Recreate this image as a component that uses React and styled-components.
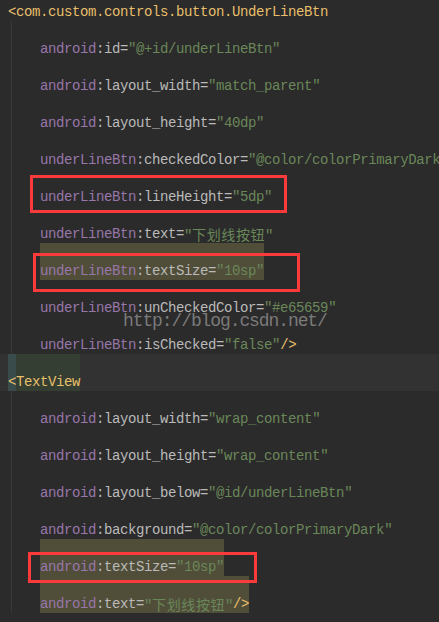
import styled, { createGlobalStyle } from "styled-components";

const Global = createGlobalStyle`
  html, body {
    margin: 0;
    background: #2b2b2b;
    overflow: hidden;
  }
`;

const Page = styled.div`
  position: relative;
  display: flow-root;
  width: 439px;
  height: 622px;
  overflow: hidden;
  background: #2b2b2b;
  font-family: "Liberation Mono", "Noto Sans CJK SC", monospace;
  font-size: 14px;
  letter-spacing: -0.4px;
`;

const Editor = styled.div`
  margin-top: -16px;
`;

const Row = styled.div`
  display: flex;
  height: 37px;
  padding-left: ${(p) => p.$indent || 0}px;
  background: ${(p) => (p.$band ? "#323232" : "transparent")};
  white-space: pre;
`;

const Content = styled.div`
  display: flex;
  padding-top: 18px;
  line-height: 20px;
  background: ${(p) => p.$bg || "transparent"};
`;

const Group = styled.div`
  margin-left: 11px;
  border-left: 1px solid #393939;
`;

const Tag = styled.span`
  color: #e8bf6a;
`;
const Ns = styled.span`
  color: #9876aa;
`;
const Attr = styled.span`
  color: #bababa;
`;
const Val = styled.span`
  color: #6a8759;
`;
const Cjk = styled.span`
  font-family: "Noto Sans CJK SC", sans-serif;
  font-size: 14px;
  letter-spacing: 0.6px;
`;

const RedBox = styled.div`
  position: absolute;
  box-sizing: border-box;
  border: 3px solid #fb3b3b;
  pointer-events: none;
`;

const Watermark = styled.div`
  position: absolute;
  left: 123px;
  top: 311px;
  font-family: "Liberation Mono", monospace;
  font-size: 18px;
  letter-spacing: -1.1px;
  color: rgba(150, 150, 150, 0.75);
  pointer-events: none;
`;

const OLIVE = "#504e39";

function Attribute({ ns, name, value, close, mark }) {
  const hasCjk = /[\u4e00-\u9fff]/.test(value);
  return (
    <Row $indent={28}>
      <Content $bg={mark ? OLIVE : null}>
        <Ns>{ns}</Ns>
        <Attr>:{name}=</Attr>
        <Val>"{hasCjk ? <Cjk>{value}</Cjk> : value}"</Val>
        {close && <Tag>/&gt;</Tag>}
      </Content>
    </Row>
  );
}

const first = [
  ["android", "id", "@+id/underLineBtn"],
  ["android", "layout_width", "match_parent"],
  ["android", "layout_height", "40dp"],
  ["underLineBtn", "checkedColor", "@color/colorPrimaryDark"],
  ["underLineBtn", "lineHeight", "5dp"],
  ["underLineBtn", "text", "下划线按钮"],
  ["underLineBtn", "textSize", "10sp", true],
  ["underLineBtn", "unCheckedColor", "#e65659"],
  ["underLineBtn", "isChecked", "false"],
];

const second = [
  ["android", "layout_width", "wrap_content"],
  ["android", "layout_height", "wrap_content"],
  ["android", "layout_below", "@id/underLineBtn"],
  ["android", "background", "@color/colorPrimaryDark"],
  ["android", "textSize", "10sp", true],
  ["android", "text", "下划线按钮", true],
];

export default function App() {
  return (
    <Page>
      <Global />
      <Editor>
        <Row $indent={8}>
          <Content>
            <Tag>&lt;com.custom.controls.button.UnderLineBtn</Tag>
          </Content>
        </Row>
        <Group>
          {first.map(([ns, name, value, mark], i) => (
            <Attribute
              key={name + i}
              ns={ns}
              name={name}
              value={value}
              mark={mark}
              close={i === first.length - 1}
            />
          ))}
        </Group>
        <Row $indent={8} $band>
          <Content $bg="#3a4b4b">
            <Tag>&lt;</Tag>
          </Content>
          <Content $bg="#343e32">
            <Tag>TextView</Tag>
          </Content>
        </Row>
        <Group>
          {second.map(([ns, name, value, mark], i) => (
            <Attribute
              key={name + i}
              ns={ns}
              name={name}
              value={value}
              mark={mark}
              close={i === second.length - 1}
            />
          ))}
        </Group>
      </Editor>
      <Watermark>http://blog.csdn.net/</Watermark>
      <RedBox style={{ left: 30, top: 175, width: 257, height: 38 }} />
      <RedBox style={{ left: 33, top: 253, width: 267, height: 39 }} />
      <RedBox style={{ left: 28, top: 552, width: 229, height: 31 }} />
    </Page>
  );
}
